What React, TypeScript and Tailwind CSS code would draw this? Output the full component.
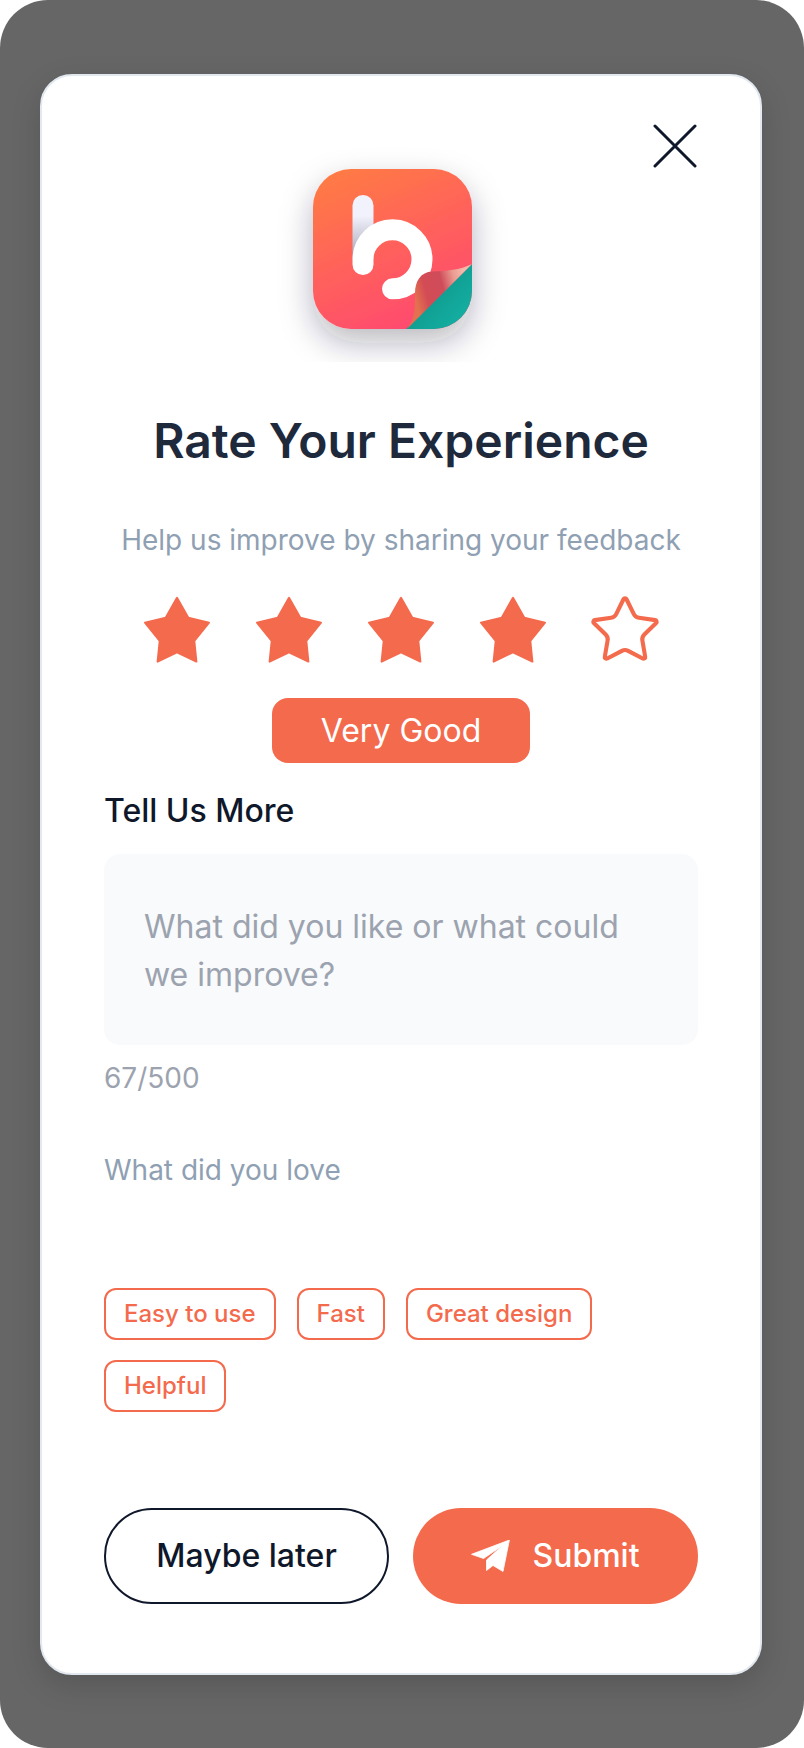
import React from "react";
import { Star } from "lucide-react";

const chips = ["Easy to use", "Fast", "Great design", "Helpful"];

function AppLogo() {
  return (
    <svg width="280" height="232" viewBox="0 0 280 232" className="block">
      <defs>
        <linearGradient id="tile" x1="70" y1="35" x2="145" y2="200" gradientUnits="userSpaceOnUse">
          <stop offset="0" stopColor="#ff7d43" />
          <stop offset="1" stopColor="#ff4a6f" />
        </linearGradient>
        <linearGradient id="stem" x1="0" y1="65" x2="0" y2="125" gradientUnits="userSpaceOnUse">
          <stop offset="0.35" stopColor="#f2f2fd" />
          <stop offset="1" stopColor="#aaaabb" />
        </linearGradient>
        <linearGradient id="teal" x1="160" y1="150" x2="212" y2="199" gradientUnits="userSpaceOnUse">
          <stop offset="0" stopColor="#0f9488" />
          <stop offset="1" stopColor="#14b5a8" />
        </linearGradient>
        <linearGradient id="flap" x1="153" y1="160" x2="205" y2="146" gradientUnits="userSpaceOnUse">
          <stop offset="0" stopColor="#e3714f" />
          <stop offset="0.22" stopColor="#d34c55" />
          <stop offset="0.55" stopColor="#cf4c5a" />
          <stop offset="0.8" stopColor="#eb9d92" />
          <stop offset="1" stopColor="#f4b9ab" />
        </linearGradient>
        <filter id="tileShadow" x="-40%" y="-40%" width="180%" height="180%">
          <feDropShadow dx="0" dy="14" stdDeviation="16" floodColor="#1c1c34" floodOpacity="0.3" />
        </filter>
        <clipPath id="tileClip">
          <rect x="53" y="39" width="159" height="160" rx="38" />
        </clipPath>
      </defs>
      <rect x="53" y="39" width="159" height="160" rx="38" fill="url(#tile)" filter="url(#tileShadow)" />
      <g clipPath="url(#tileClip)">
        <path d="M103 75.5V128" stroke="url(#stem)" strokeWidth="21" strokeLinecap="round" fill="none" />
        <path d="M103 134.5V129A29.5 29.5 0 1 1 132.5 158.8" stroke="#ffffff" strokeWidth="21" strokeLinecap="round" fill="none" />
        <path d="M212 134L146 199H212Z" fill="url(#teal)" />
        <path d="M212 134C200 140 186 141 172 141.5C161 142 155 151 155 163C155 175 156 187 147 199Z" fill="url(#flap)" />
      </g>
    </svg>
  );
}

function FilledStar() {
  return (
    <svg width="70" height="70" viewBox="0 0 70 70" className="block">
      <path
        d="M35 2.8L46.3 22.7L67 27.6L52.3 46L54.4 66.6L35 57.3L15.6 66.6L17.7 46L3 27.6L23.7 22.7Z"
        fill="#f46a4d"
        stroke="#f46a4d"
        strokeWidth="2"
        strokeLinejoin="round"
      />
    </svg>
  );
}

export default function App() {
  return (
    <div className="h-[1748px] w-full bg-white font-['Inter',sans-serif]">
      <div className="flex h-full flex-col items-start rounded-[48px] bg-[#666666] pl-10 pt-[74px]">
        <div className="relative flex h-[1601px] w-[722px] flex-col rounded-[32px] border-2 border-[#e2e8f0] bg-white px-[62px] pt-[54px] shadow-[0_10px_30px_rgba(0,0,0,0.15)]">
          <button className="absolute right-[63px] top-[48px]">
            <svg width="44" height="44" viewBox="0 0 44 44" className="block">
              <path d="M2 2L42 42M42 2L2 42" stroke="#0f172a" strokeWidth="3" strokeLinecap="round" />
            </svg>
          </button>

          <div className="ml-[156px]">
            <AppLogo />
          </div>

          <h1 className="mt-[51px] text-center text-[48px] font-semibold leading-[56px] text-[#1e293b]">
            Rate Your Experience
          </h1>
          <p className="mt-[53px] text-center text-[28px] leading-[36px] text-[#8fa0b3]">
            Help us improve by sharing your feedback
          </p>

          <div className="mt-[34px] flex h-[76px] items-center justify-center">
            {[0, 1, 2, 3].map((n) => (
              <div key={n} className="flex w-28 justify-center">
                <FilledStar />
              </div>
            ))}
            <div className="flex w-28 justify-center">
              <Star size={76} strokeWidth={1.3} color="#f46a4d" />
            </div>
          </div>

          <div className="mt-[30px] flex justify-center">
            <div className="flex h-[65px] w-[258px] items-center justify-center rounded-2xl bg-[#f46a4d] text-[32px] text-white">
              Very Good
            </div>
          </div>

          <h2 className="mt-[28px] text-[32px] font-medium leading-[40px] text-[#0f172a]">Tell Us More</h2>

          <div className="mt-[23px] h-[191px] rounded-2xl bg-[#f8fafc] p-10 pt-[49px]">
            <p className="text-[32px] leading-[48px] text-[#9ca3af]">What did you like or what could we improve?</p>
          </div>

          <p className="mt-[15px] text-[28px] leading-[36px] text-[#9ca3af]">67/500</p>
          <p className="mt-[56px] text-[28px] leading-[36px] text-[#8fa0b3]">What did you love</p>

          <div className="mt-[100px] flex flex-wrap gap-x-[21px] gap-y-[20px]">
            {chips.map((chip) => (
              <span
                key={chip}
                className="flex h-[52px] items-center rounded-xl border-2 border-[#f46a4d] px-[18px] text-[24px] font-medium text-[#f46a4d]"
              >
                {chip}
              </span>
            ))}
          </div>

          <div className="mt-[96px] flex justify-between">
            <button className="flex h-24 w-[285px] items-center justify-center rounded-full border-2 border-[#0f172a] text-[32px] font-medium text-[#0f172a]">
              Maybe later
            </button>
            <button className="flex h-24 w-[285px] items-center justify-center gap-[22px] rounded-full bg-[#f46a4d] text-[32px] font-medium text-white">
              <svg width="39" height="32" viewBox="0 0 39 32" className="block">
                <path
                  d="M38.4 0L0.5 14.3L12.5 18.5L31 6L15.5 20L15.5 30.5L22 25.5L32 31.5Z"
                  fill="#ffffff"
                  stroke="#ffffff"
                  strokeWidth="0.8"
                  strokeLinejoin="round"
                />
              </svg>
              Submit
            </button>
          </div>
        </div>
      </div>
    </div>
  );
}
